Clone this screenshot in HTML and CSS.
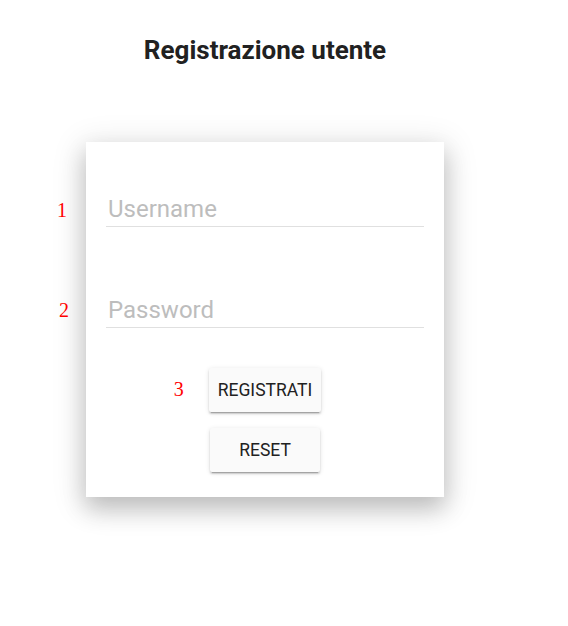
FILE: index.html
```html
<!DOCTYPE html>
<html lang="it">
<head>
<meta charset="utf-8">
<title>Registrazione utente</title>
<link rel="stylesheet" href="styles.css">
</head>
<body>
<div class="page">
  <h2 class="title">Registrazione utente</h2>
  <form class="card">
    <div class="field">
      <span class="marker marker-1">1</span>
      <input class="input" type="text" placeholder="Username">
    </div>
    <div class="field">
      <span class="marker marker-2">2</span>
      <input class="input" type="password" placeholder="Password">
    </div>
    <div class="actions">
      <div class="btn-wrap">
        <span class="marker marker-3">3</span>
        <button class="btn btn-main" type="button">REGISTRATI</button>
      </div>
      <button class="btn btn-reset" type="reset">RESET</button>
    </div>
  </form>
</div>
</body>
</html>
```
FILE: styles.css
```css
html {
  background: #ffffff;
}
body {
  margin: 0;
  padding: 8px 8px 120px;
  font-family: Roboto, "Liberation Sans", sans-serif;
  color: #212121;
}
.page {
  width: 514px;
  display: flex;
  flex-direction: column;
  align-items: center;
}
.title {
  margin: 27px 0 0;
  font-size: 26px;
  line-height: 30px;
  font-weight: 700;
  color: #212121;
}
.card {
  margin-top: 77px;
  width: 358px;
  box-sizing: border-box;
  padding: 50px 20px 25px;
  background: #ffffff;
  display: flex;
  flex-direction: column;
  box-shadow: 0 12px 22px rgba(0,0,0,.18), 0 6px 30px 4px rgba(0,0,0,.12);
}
.field {
  position: relative;
  margin-bottom: 66px;
}
.field:nth-child(2) {
  margin-bottom: 40px;
}
.input {
  display: block;
  box-sizing: content-box;
  height: 34px;
  margin: 0;
  padding: 0 2px;
  width: calc(100% - 4px);
  border: none;
  border-bottom: 1px solid #e0e0e0;
  outline: none;
  font-family: Roboto, "Liberation Sans", sans-serif;
  font-size: 24px;
  color: #212121;
  background: transparent;
}
.input::placeholder {
  color: #bdbdbd;
  opacity: 1;
}
.marker {
  position: absolute;
  font-family: "Liberation Serif", "Times New Roman", serif;
  font-size: 20px;
  line-height: 20px;
  color: #ff0000;
}
.marker-1 {
  left: -49px;
  top: 8px;
}
.marker-2 {
  left: -47px;
  top: 7px;
}
.marker-3 {
  left: -35px;
  top: 11px;
}
.actions {
  display: flex;
  flex-direction: column;
  align-items: center;
  gap: 16px;
}
.btn-wrap {
  position: relative;
}
.btn {
  display: block;
  height: 44px;
  min-width: 110px;
  padding: 0 9px;
  border: none;
  border-radius: 2px;
  background: #fafafa;
  color: #212121;
  font-family: Roboto, "Liberation Sans", sans-serif;
  font-size: 17.5px;
  font-weight: 400;
  box-shadow: 0 3px 1px -2px rgba(0,0,0,.2), 0 2px 2px 0 rgba(0,0,0,.14), 0 1px 5px 0 rgba(0,0,0,.12);
  cursor: pointer;
}
```
